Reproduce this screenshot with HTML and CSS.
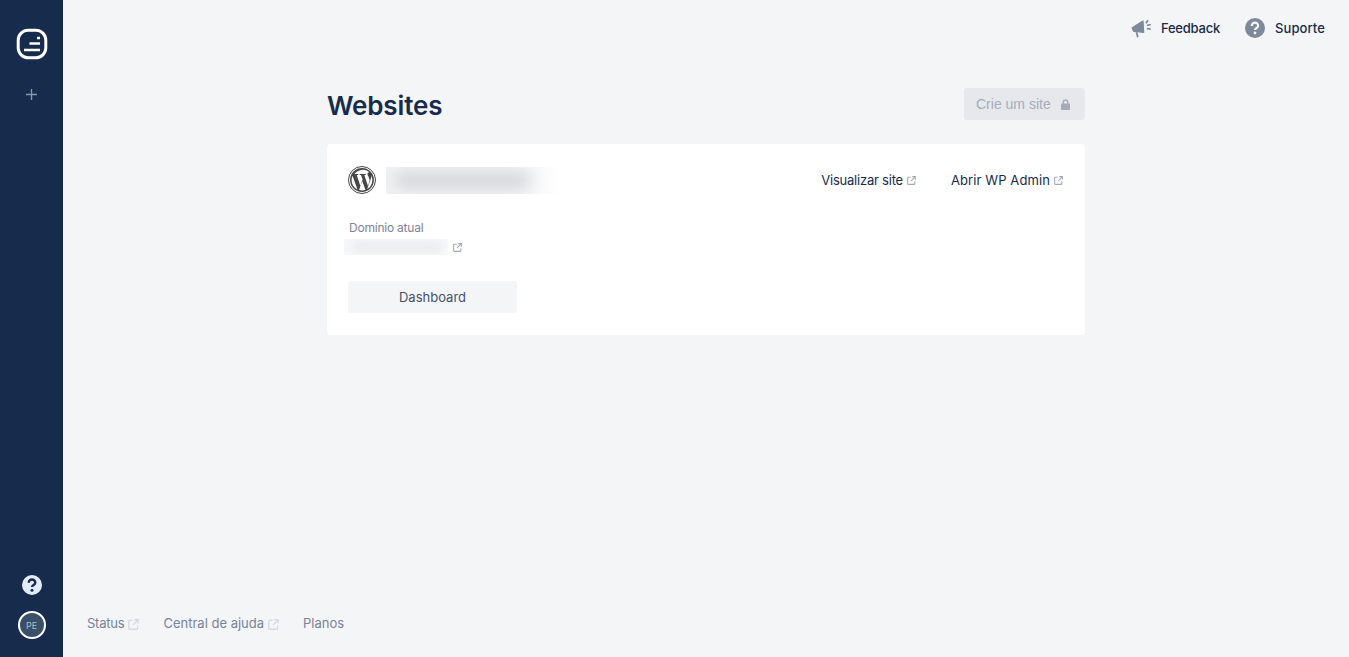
FILE: index.html
```html
<!DOCTYPE html>
<html lang="pt">
<head>
<meta charset="utf-8">
<title>Websites</title>
<link rel="stylesheet" href="styles.css">
</head>
<body>
<svg class="defs" width="0" height="0" aria-hidden="true">
  <symbol id="ext" viewBox="0 0 10 10">
    <path d="M4.200 1.300H1.300a.6.6 0 0 0-.6.6v6.800c0 .3.3.6.6.6h6.800c.3 0 .6-.3.6-.6V5.800" fill="none" stroke="currentColor" stroke-width="1.200"/>
    <path d="M5.800.7h3.500v3.500M9.100.9 4.600 5.400" fill="none" stroke="currentColor" stroke-width="1.200"/>
  </symbol>
</svg>
<div class="app">
  <aside class="sidebar">
    <div class="side-top">
      <svg class="logo" width="32" height="32" viewBox="0 0 32 32">
        <rect x="2.200" y="2.200" width="27.600" height="27.600" rx="10" fill="none" stroke="#fff" stroke-width="3"/>
        <path d="M8 22h16M13.500 15.500h10.500M21 10h3" fill="none" stroke="#fff" stroke-width="2.600"/>
      </svg>
      <svg class="plus" width="11" height="11" viewBox="0 0 11 11">
        <path d="M5.500 0v11M0 5.500h11" stroke="#8995ab" stroke-width="1.400"/>
      </svg>
    </div>
    <div class="side-bottom">
      <svg width="20" height="20" viewBox="0 0 20 20">
        <circle cx="10" cy="10" r="10" fill="#e4ecfb"/>
        <path d="M6.700 7.800a3.300 3.300 0 0 1 6.600 0c0 2.200-3.300 2.200-3.300 4.200" fill="none" stroke="#172b4d" stroke-width="2.400"/>
        <circle cx="10" cy="15.200" r="1.500" fill="#172b4d"/>
      </svg>
      <div class="avatar">PE</div>
    </div>
  </aside>
  <div class="main">
    <header class="topbar">
      <a class="top-link">
        <svg width="20" height="20" viewBox="0 0 20 20">
          <path d="M1.200 9.800 12 3l.7 11.500-10.200-1.300z" fill="#7f899c" stroke="#7f899c" stroke-width="1.200" stroke-linejoin="round"/>
          <path d="M4.500 14l1.500 5.500 1.700-.5-1.200-4.800z" fill="#7f899c"/>
          <path d="M15 5.200l2-3M15.800 7.500l4-1M15.800 10.500l4 .6" fill="none" stroke="#7f899c" stroke-width="1.700"/>
        </svg>
        <span class="tight">Feedback</span>
      </a>
      <a class="top-link">
        <svg width="20" height="20" viewBox="0 0 20 20">
          <circle cx="10" cy="10" r="10" fill="#7f899c"/>
          <path d="M6.800 7.900a3.200 3.200 0 0 1 6.400 0c0 2.100-3.200 2.100-3.200 4.100" fill="none" stroke="#f4f5f7" stroke-width="2.200"/>
          <circle cx="10" cy="15" r="1.400" fill="#f4f5f7"/>
        </svg>
        <span class="wide">Suporte</span>
      </a>
    </header>
    <main class="content">
      <div class="page-head">
        <h1>Websites</h1>
        <button class="create" type="button">
          <span>Crie um site</span>
          <svg width="9" height="11" viewBox="0 0 9 11">
            <path d="M2.200 5V3.300a2.300 2.300 0 0 1 4.600 0V5" fill="none" stroke="#a4abba" stroke-width="1.400"/>
            <rect x="0" y="4.600" width="9" height="6.400" rx="1" fill="#a4abba"/>
          </svg>
        </button>
      </div>
      <section class="card">
        <div class="card-head">
          <div class="site">
            <svg class="wp" width="28" height="28" viewBox="0 0 28 28">
              <circle cx="14" cy="14" r="13.500" fill="#fff" stroke="#464646" stroke-width="1"/>
              <circle cx="14" cy="14" r="11.900" fill="#464646"/>
              <path d="M3.600 14a10.400 10.400 0 0 0 5.900 9.400L4.500 9.800A10.400 10.400 0 0 0 3.600 14z" fill="#fff"/>
              <path d="M21.300 13.500c0-1.300-.5-2.200-.9-2.900-.5-.9-1-1.600-1-2.500 0-1 .8-1.900 1.800-1.900h.2A10.400 10.400 0 0 0 6.400 8.100h.7c1.100 0 2.800-.1 2.800-.1.600 0 .6.800 0 .9 0 0-.6.100-1.200.1l3.700 11.100 2.200-6.700-1.600-4.400c-.5 0-1.100-.1-1.100-.1-.5 0-.5-.9.100-.9 0 0 1.700.1 2.700.1 1.100 0 2.800-.1 2.800-.1.600 0 .6.800 0 .9 0 0-.6.100-1.200.1l3.700 11 1-3.400c.4-1.300.7-2.300.7-3.100z" fill="#fff"/>
              <path d="M14.200 15 11.100 24a10.400 10.400 0 0 0 6.400-.2l-.1-.1zM23.100 9.100c0 .4.100.7.100 1.100 0 1.100-.2 2.200-.8 3.700l-3.200 9.200A10.400 10.400 0 0 0 23.100 9.100z" fill="#fff"/>
            </svg>
            <div class="blur-wrap name-wrap"><div class="blur-name"></div></div>
          </div>
          <nav class="card-links">
            <a class="card-link"><span class="tight">Visualizar site</span> <svg class="ext" width="9" height="9"><use href="#ext"/></svg></a>
            <a class="card-link"><span class="wide">Abrir WP Admin</span> <svg class="ext" width="9" height="9"><use href="#ext"/></svg></a>
          </nav>
        </div>
        <div class="domain">
          <div class="domain-label">Domínio atual</div>
          <div class="domain-value">
            <div class="blur-wrap url-wrap"><div class="blur-url"></div></div>
            <svg class="ext" width="9" height="9"><use href="#ext"/></svg>
          </div>
        </div>
        <button class="dash" type="button">Dashboard</button>
      </section>
    </main>
    <footer class="footer">
      <a class="foot-link"><span class="tight">Status</span> <svg class="ext-foot" width="11" height="11"><use href="#ext"/></svg></a>
      <a class="foot-link">Central de ajuda <svg class="ext-foot" width="11" height="11"><use href="#ext"/></svg></a>
      <a class="foot-link">Planos</a>
    </footer>
  </div>
</div>
</body>
</html>
```
FILE: styles.css
```css
* { box-sizing: border-box; }
html, body { margin: 0; height: 100%; }
body {
  font-family: Inter, "Noto Sans", sans-serif;
  background: #f4f5f7;
  color: #1f2937;
  overflow: hidden;
}
.defs { position: absolute; }
.tight { letter-spacing: -0.22px; }
.wide { letter-spacing: 0.1px; }
.app { display: flex; height: 657px; }
.sidebar {
  width: 63px;
  flex: none;
  background: #172b4d;
  display: flex;
  flex-direction: column;
  justify-content: space-between;
  align-items: center;
  padding: 28px 0 18px;
}
.side-top { display: flex; flex-direction: column; align-items: center; gap: 29px; }
.side-bottom { display: flex; flex-direction: column; align-items: center; gap: 16px; }
.avatar {
  width: 28px;
  height: 28px;
  border-radius: 50%;
  border: 2px solid #fff;
  background: #3a5068;
  color: #b4bcc6;
  font-size: 9px;
  display: flex;
  align-items: center;
  justify-content: center;
}
.main { flex: 1; display: flex; flex-direction: column; min-width: 0; }
.topbar {
  display: flex;
  justify-content: flex-end;
  gap: 25px;
  padding: 18px 24px 0 0;
  height: 88px;
}
.top-link {
  display: flex;
  align-items: center;
  gap: 10px;
  height: 20px;
  font-size: 13px;
  font-weight: 500;
  color: #172b4d;
}
.content { width: 758px; margin: 0 auto; flex: 1; }
.page-head {
  display: flex;
  justify-content: space-between;
  align-items: flex-start;
  height: 56px;
}
h1 {
  margin: 0;
  font-size: 26px;
  line-height: 36px;
  font-weight: 600;
  letter-spacing: -0.15px;
  color: #172b4d;
}
.create {
  width: 121px;
  height: 32px;
  border: 0;
  border-radius: 3px;
  background: #e6e8ec;
  color: #a5adbd;
  font: 400 14px "Liberation Sans", Arial, sans-serif;
  display: flex;
  align-items: center;
  gap: 10px;
  padding: 0 0 0 12px;
}
.card {
  height: 191px;
  background: #fff;
  border-radius: 4px;
  padding: 22px 22px 0 21px;
}
.card-head { display: flex; justify-content: space-between; align-items: center; height: 28px; }
.site { display: flex; align-items: center; gap: 10px; }
.blur-wrap { overflow: hidden; }
.name-wrap {
  width: 174px;
  height: 27px;
  background: linear-gradient(90deg, #f1f2f3 0, #f1f2f3 70%, #fff 100%);
}
.blur-name {
  width: 134px;
  height: 11px;
  margin: 8px 0 0 10px;
  background: #c6cace;
  filter: blur(8px);
}
.card-links { display: flex; gap: 35px; }
.card-link {
  display: flex;
  align-items: center;
  gap: 4px;
  font-size: 13px;
  color: #172b4d;
}
.ext { color: #a3a9b5; flex: none; margin-top: 1px; }
.domain { margin-top: 26px; }
.domain-label {
  font-size: 12px;
  line-height: 16px;
  color: #7b8499;
  letter-spacing: -0.22px;
  padding-left: 1px;
}
.domain-value {
  display: flex;
  align-items: center;
  gap: 5px;
  margin: 3px 0 0 -4px;
}
.url-wrap { width: 104px; height: 16px; background: #f6f7f8; }
.blur-url {
  width: 88px;
  height: 10px;
  margin: 3px 0 0 9px;
  background: #e9ebee;
  filter: blur(4px);
}
.dash {
  display: block;
  width: 169px;
  height: 32px;
  margin-top: 26px;
  border: 0;
  border-radius: 3px;
  background: #f4f5f7;
  color: #42526e;
  font: 400 13px Inter, sans-serif;
}
.footer {
  display: flex;
  gap: 24px;
  padding: 0 0 25px 24px;
  height: 43px;
  align-items: flex-start;
}
.foot-link {
  display: flex;
  align-items: center;
  gap: 4px;
  font-size: 13px;
  line-height: 18px;
  color: #78829a;
}
.ext-foot { color: #d6d9de; margin-top: 2px; }
```
